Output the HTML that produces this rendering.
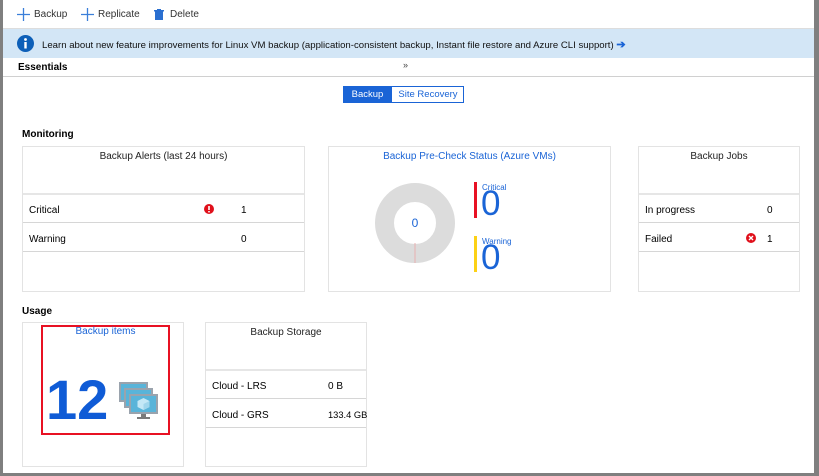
<!DOCTYPE html>
<html><head><meta charset="utf-8"><style>
*{margin:0;padding:0;box-sizing:border-box}
body{width:819px;height:476px;background:#7f7f7f;position:relative;overflow:hidden;font-family:"Liberation Sans",sans-serif;font-size:10px;color:#000}
.pg{position:absolute;left:3px;top:0;width:811px;height:473px;background:#fff}
.a{position:absolute;white-space:nowrap}
.card{position:absolute;border:1px solid #e3e3e3;background:#fff}
.hl{position:absolute;left:0;right:0;height:2px;background:#e6e6e6}
.ln{position:absolute;left:0;right:0;height:1px;background:#d6d6d6}
.b{font-weight:bold}
.blue{color:#1a64d6}
</style></head><body>
<div class="pg"></div>
<svg class="a" style="left:17px;top:8px" width="13" height="13"><path d="M6.5 0v13M0 6.5h13" stroke="#3b7fd9" stroke-width="1.3"/></svg>
<div class="a" style="left:34px;top:9px;color:#333">Backup</div>
<svg class="a" style="left:81px;top:8px" width="13" height="13"><path d="M6.5 0v13M0 6.5h13" stroke="#3b7fd9" stroke-width="1.3"/></svg>
<div class="a" style="left:98px;top:9px;color:#333">Replicate</div>
<svg class="a" style="left:154px;top:9px" width="10" height="11"><rect x="1" y="2" width="8" height="9" fill="#2a6fd0"/><rect x="0" y="1" width="10" height="1.5" fill="#2a6fd0"/><rect x="3" y="0" width="4" height="1" fill="#2a6fd0"/></svg>
<div class="a" style="left:170px;top:9px;color:#333">Delete</div>
<div class="a" style="left:3px;top:28px;width:811px;height:1px;background:#ddd"></div>
<div class="a" style="left:3px;top:29px;width:811px;height:29px;background:#d3e6f6"></div>
<svg class="a" style="left:17px;top:35px" width="17" height="17"><circle cx="8.5" cy="8.5" r="8.5" fill="#0d5fb8"/><rect x="7.3" y="7" width="2.4" height="6.5" fill="#fff"/><circle cx="8.5" cy="4.5" r="1.4" fill="#fff"/></svg>
<div class="a" style="left:42px;top:38px;color:#111;font-size:9.6px">Learn about new feature improvements for Linux VM backup (application-consistent backup, Instant file restore and Azure CLI support) <b style="color:#1a64d6;font-size:11px">➔</b></div>
<div class="a b" style="left:18px;top:62px">Essentials</div>
<div class="a" style="left:403px;top:60px;font-size:9px;color:#444">»</div>
<div class="a" style="left:3px;top:76px;width:811px;height:1px;background:#d0d0d0"></div>
<div class="a" style="left:343px;top:86px;width:121px;height:17px;border:1px solid #1a64d6"></div>
<div class="a" style="left:343px;top:86px;width:49px;height:17px;background:#1a64d6;color:#fff;text-align:center;line-height:18px;font-size:9.5px">Backup</div>
<div class="a" style="left:392px;top:86px;width:72px;height:17px;color:#1a64d6;text-align:center;line-height:18px;font-size:9.5px">Site Recovery</div>
<div class="a b" style="left:22px;top:129px">Monitoring</div>
<div class="card" style="left:22px;top:146px;width:283px;height:146px">
 <div class="a" style="left:0;right:0;top:4px;text-align:center;color:#222">Backup Alerts (last 24 hours)</div>
 <div class="hl" style="top:46px"></div><div class="ln" style="top:75px"></div><div class="ln" style="top:104px"></div>
 <div class="a" style="left:6px;top:58px">Critical</div>
 <svg class="a" style="left:181px;top:57px" width="10" height="10"><circle cx="5" cy="5" r="5" fill="#e0101b"/><rect x="4.2" y="2" width="1.6" height="4" fill="#fff"/><rect x="4.2" y="7" width="1.6" height="1.4" fill="#fff"/></svg>
 <div class="a" style="left:218px;top:58px">1</div>
 <div class="a" style="left:6px;top:87px">Warning</div>
 <div class="a" style="left:218px;top:87px">0</div>
</div>
<div class="card" style="left:328px;top:146px;width:283px;height:146px">
 <div class="a blue" style="left:0;right:0;top:4px;text-align:center">Backup Pre-Check Status (Azure VMs)</div>
 <svg class="a" style="left:46px;top:36px" width="80" height="80"><circle cx="40" cy="40" r="30.5" fill="none" stroke="#dcdcdc" stroke-width="19"/><line x1="40" y1="60" x2="40" y2="80" stroke="#e8b0b0"/></svg>
 <div class="a blue" style="left:46px;top:69px;width:80px;text-align:center;font-size:12px">0</div>
 <div class="a" style="left:145px;top:35px;width:3px;height:36px;background:#e81123"></div>
 <div class="a blue" style="left:153px;top:36px;font-size:8px">Critical</div>
 <div class="a blue" style="left:152px;top:39px;font-size:35px;line-height:36px">0</div>
 <div class="a" style="left:145px;top:89px;width:3px;height:36px;background:#fcd116"></div>
 <div class="a blue" style="left:153px;top:90px;font-size:8px">Warning</div>
 <div class="a blue" style="left:152px;top:93px;font-size:35px;line-height:36px">0</div>
</div>
<div class="card" style="left:638px;top:146px;width:162px;height:146px">
 <div class="a" style="left:0;right:0;top:4px;text-align:center;color:#222">Backup Jobs</div>
 <div class="hl" style="top:46px"></div><div class="ln" style="top:75px"></div><div class="ln" style="top:104px"></div>
 <div class="a" style="left:6px;top:58px">In progress</div>
 <div class="a" style="left:128px;top:58px">0</div>
 <div class="a" style="left:6px;top:87px">Failed</div>
 <svg class="a" style="left:107px;top:86px" width="10" height="10"><circle cx="5" cy="5" r="5" fill="#e0101b"/><path d="M3 3l4 4M7 3l-4 4" stroke="#fff" stroke-width="1.4"/></svg>
 <div class="a" style="left:128px;top:87px">1</div>
</div>
<div class="a b" style="left:22px;top:306px">Usage</div>
<div class="card" style="left:22px;top:322px;width:162px;height:145px"></div>
<div class="a" style="left:41px;top:325px;width:129px;height:110px;border:2px solid #e81123"></div>
<div class="a blue" style="left:41px;top:326px;width:129px;text-align:center">Backup items</div>
<div class="a" style="left:46px;top:368px;font-size:56px;font-weight:bold;color:#0f5bd6;line-height:64px">12</div>
<svg class="a" style="left:118px;top:382px" width="42" height="42">
 <rect x="1" y="0" width="29" height="20" fill="#9aa3ad"/><rect x="3" y="2" width="25" height="16" fill="#59b4d9"/>
 <rect x="6" y="6" width="29" height="20" fill="#9aa3ad"/><rect x="8" y="8" width="25" height="16" fill="#59b4d9"/>
 <rect x="11" y="12" width="29" height="20" fill="#9aa3ad"/><rect x="13" y="14" width="25" height="16" fill="#59b4d9"/>
 <path d="M25.5 16l6 3v6l-6 3-6-3v-6z" fill="#c3e8f6"/><path d="M25.5 22l6-3v6l-6 3z" fill="#a0d6ec"/>
 <rect x="23" y="32" width="5" height="3" fill="#7a7a7a"/><rect x="19" y="35" width="13" height="2" fill="#7a7a7a"/>
</svg>
<div class="card" style="left:205px;top:322px;width:162px;height:145px">
 <div class="a" style="left:0;right:0;top:4px;text-align:center;color:#222">Backup Storage</div>
 <div class="hl" style="top:46px"></div><div class="ln" style="top:75px"></div><div class="ln" style="top:104px"></div>
 <div class="a" style="left:6px;top:58px">Cloud - LRS</div>
 <div class="a" style="left:122px;top:58px">0 B</div>
 <div class="a" style="left:6px;top:87px">Cloud - GRS</div>
 <div class="a" style="left:122px;top:87px;font-size:9.3px">133.4 GB</div>
</div>
</body></html>
